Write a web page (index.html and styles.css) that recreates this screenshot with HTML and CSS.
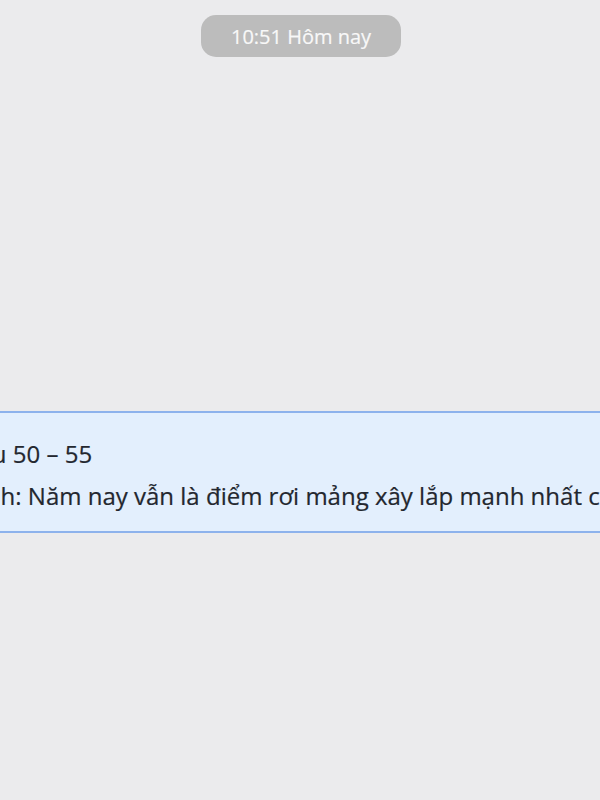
FILE: index.html
```html
<!DOCTYPE html>
<html lang="vi">
<head>
<meta charset="utf-8">
<link rel="stylesheet" href="styles.css">
</head>
<body>
<div class="chat">
  <div class="stamp-row"><span class="stamp">10:51 Hôm nay</span></div>
  <div class="card">
    <div class="line line-1">Giá mục tiêu 50 – 55</div>
    <div class="line line-2">Nhận định: Năm nay vẫn là điểm rơi mảng xây lắp mạnh nhất của công ty</div>
  </div>
</div>
</body>
</html>
```
FILE: styles.css
```css
html, body {
  margin: 0;
  padding: 0;
  background: #ebebed;
  overflow: hidden;
}
.chat {
  width: 600px;
  height: 800px;
  overflow: hidden;
  font-family: "Open Sans", "Noto Sans", sans-serif;
}
.stamp-row {
  display: flex;
  justify-content: center;
  padding-top: 15px;
}
.stamp {
  display: flex;
  align-items: center;
  justify-content: center;
  width: 200px;
  height: 42px;
  margin-left: 2px;
  border-radius: 15px;
  background: #bcbcbc;
  color: #f8f8f8;
  font-size: 20px;
  -webkit-text-stroke: 0.2px #f8f8f8;
}
.card {
  margin: 354px -300px 0 -300px;
  background: #e3effd;
  border-top: 2px solid #8db2ec;
  border-bottom: 2px solid #8db2ec;
  padding: 20px 0 14px 0;
  color: #23272f;
  font-size: 24px;
  line-height: 42px;
  white-space: nowrap;
  -webkit-text-stroke: 0.2px #23272f;
}
.line-1 {
  padding-left: 166px;
}
.line-2 {
  padding-left: 198px;
}
```
